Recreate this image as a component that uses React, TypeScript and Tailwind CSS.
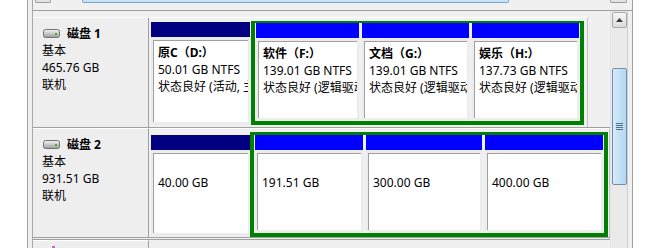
import React from 'react';

type Cell = {
  w?: string;
  bar: string;
  lines: string[];
};

const DiskIcon = () => (
  <svg width="17" height="9" viewBox="0 0 17 9">
    <defs>
      <linearGradient id="dk" x1="0" y1="0" x2="0" y2="1">
        <stop offset="0" stopColor="#f4f4f4" />
        <stop offset="0.5" stopColor="#c9c9c9" />
        <stop offset="1" stopColor="#9a9a9a" />
      </linearGradient>
    </defs>
    <rect x="0.5" y="0.5" width="16" height="8" rx="2" fill="url(#dk)" stroke="#727272" />
    <rect x="12" y="4" width="2" height="2" fill="#34b33a" />
  </svg>
);

// one partition: colour bar on top, sunken white box under it
const Part = ({ cell }: { cell: Cell }) => (
  <div className={`${cell.w ?? 'flex-1'} min-w-0 shrink-0 flex flex-col h-full bg-[#ececec] overflow-hidden`}>
    <div className={`h-[15px] shrink-0 ${cell.bar}`} />
    <div className="flex-1 min-w-0 mt-[3px] ml-[2px] mr-[2px] mb-[3px] bg-white border-t border-l border-[#a0a0a0] pt-[3px] pl-[4px] overflow-hidden whitespace-nowrap leading-[17px]">
      {cell.lines.map((l, i) => (
        <div key={i} className={i === 0 ? 'font-bold' : ''}>
          {l || '\u00a0'}
        </div>
      ))}
    </div>
  </div>
);

const DiskLabel = ({ name, size }: { name: string; size: string }) => (
  <div className="w-[116px] shrink-0 bg-[#eeeeee] border-t border-t-white border-r border-r-[#a0a0a0] pt-[7px] pl-[9px] leading-[17px]">
    <div className="flex items-center">
      <span className="ml-[1px] mr-[7px] flex">
        <DiskIcon />
      </span>
      <span className="font-bold">{name}</span>
    </div>
    <div>基本</div>
    <div>{size}</div>
    <div>联机</div>
  </div>
);

export default function App() {
  return (
    <div className="w-[654px] h-[248px] overflow-hidden bg-white flex text-[12px] text-black font-['Noto_Sans','Noto_Sans_CJK_SC',sans-serif]">
      <div className="w-[27px] shrink-0 bg-white" />
      <div className="w-[606px] shrink-0 bg-[#f0f0f0] border-l border-r border-[#a0a0a0] flex">
        <div className="w-[4px] shrink-0" />
        <div className="flex-1 border-l border-[#a9a9a9] flex flex-col">
          {/* bottom of the volume list's horizontal scrollbar */}
          <div className="h-[11px] shrink-0 border-b border-[#a0a0a0] flex items-start">
            <div className="w-[2px]" />
            <div className="w-[16px] h-[3px] bg-[#e2e2e2] border-x border-b border-[#9c9c9c] rounded-b-[2px]" />
            <div className="w-[31px]" />
            <div className="w-[427px] h-[3px] bg-[#c9e3f6] border-x border-b border-[#7ea4cc] rounded-b-[2px]" />
            <div className="flex-1" />
            <div className="w-[17px] h-[3px] bg-[#e2e2e2] border-x border-b border-[#9c9c9c] rounded-b-[2px]" />
            <div className="w-[5px]" />
          </div>

          <div className="flex-1 flex">
            <div className="w-[577px] shrink-0 pt-[6px] flex flex-col">
              {/* disk 1 */}
              <div className="h-[111px] shrink-0 flex border-b border-[#a0a0a0]">
                <DiskLabel name="磁盘 1" size="465.76 GB" />
                <div className="w-[439px] shrink-0 border-t border-t-white border-r border-r-[#c4c4c4] pt-[3px] pl-[2px] flex items-start gap-[1px]">
                  <div className="w-[99px] h-[103px] mt-[1px] flex">
                    <Part cell={{ w: 'w-full', bar: 'bg-[#000080]', lines: ['原C（D:）', '50.01 GB NTFS', '状态良好 (活动, 主分区)'] }} />
                  </div>
                  <div className="w-[333px] h-[104px] border-[#008000] border-t-2 border-x-4 border-b-4 px-[1px] flex gap-[3px] overflow-hidden">
                    <Part cell={{ w: 'w-[103px]', bar: 'bg-[#0000ff]', lines: ['软件（F:）', '139.01 GB NTFS', '状态良好 (逻辑驱动器)'] }} />
                    <Part cell={{ w: 'w-[107px]', bar: 'bg-[#0000ff]', lines: ['文档（G:）', '139.01 GB NTFS', '状态良好 (逻辑驱动器)'] }} />
                    <Part cell={{ w: 'w-[107px]', bar: 'bg-[#0000ff]', lines: ['娱乐（H:）', '137.73 GB NTFS', '状态良好 (逻辑驱动器)'] }} />
                  </div>
                </div>
              </div>

              {/* disk 2 */}
              <div className="h-[110px] shrink-0 flex border-b border-[#a0a0a0]">
                <DiskLabel name="磁盘 2" size="931.51 GB" />
                <div className="w-[461px] shrink-0 border-t border-t-white border-r border-r-[#c4c4c4] pt-[3px] pl-[2px] flex items-start">
                  <div className="w-[99px] h-[101px] mt-[3px] flex">
                    <Part cell={{ w: 'w-full', bar: 'bg-[#000080]', lines: ['', '40.00 GB'] }} />
                  </div>
                  <div className="w-[358px] h-[105px] border-[#008000] border-t-[3px] border-x-4 border-b-4 px-[1px] flex gap-[3px] overflow-hidden">
                    <Part cell={{ w: 'w-[108px]', bar: 'bg-[#0000ff]', lines: ['', '191.51 GB'] }} />
                    <Part cell={{ w: 'w-[116px]', bar: 'bg-[#0000ff]', lines: ['', '300.00 GB'] }} />
                    <Part cell={{ w: 'w-[118px]', bar: 'bg-[#0000ff]', lines: ['', '400.00 GB'] }} />
                  </div>
                </div>
              </div>

              {/* disk 3, cut off */}
              <div className="mt-[1px] flex-1 flex border-t border-[#a0a0a0]">
                <div className="w-[116px] shrink-0 bg-[#eeeeee] border-t border-t-white border-r border-r-[#a0a0a0] pl-[19px] pt-[5px]">
                  <div className="w-[3px] h-[3px] bg-[#c86ac8]" />
                </div>
              </div>
            </div>

            {/* vertical scrollbar */}
            <div className="w-[17px] shrink-0 bg-[#eaeaea] border-l border-[#e4e4e4] flex flex-col items-center">
              <div className="mt-[1px] w-[15px] h-[16px] rounded-[2px] border border-[#a8a8a8] bg-gradient-to-b from-[#f6f6f6] to-[#dcdcdc] flex items-center justify-center">
                <svg width="7" height="4" viewBox="0 0 7 4">
                  <path d="M0 4 L3.5 0 L7 4 Z" fill="#3a3a3a" />
                </svg>
              </div>
              <div className="mt-[40px] w-[15px] h-[117px] rounded-[2px] border border-[#6f8fb0] bg-gradient-to-r from-[#d7ebf9] to-[#b3d7f1] flex items-center justify-center">
                <div className="flex flex-col gap-[1px]">
                  <div className="w-[7px] h-[1px] bg-[#4f6f8f]" />
                  <div className="w-[7px] h-[1px] bg-[#4f6f8f]" />
                  <div className="w-[7px] h-[1px] bg-[#4f6f8f]" />
                  <div className="w-[7px] h-[1px] bg-[#4f6f8f]" />
                </div>
              </div>
            </div>
            <div className="w-[5px] shrink-0 border-l border-[#cfcfcf]" />
          </div>
        </div>
      </div>
      <div className="flex-1 bg-white" />
    </div>
  );
}
